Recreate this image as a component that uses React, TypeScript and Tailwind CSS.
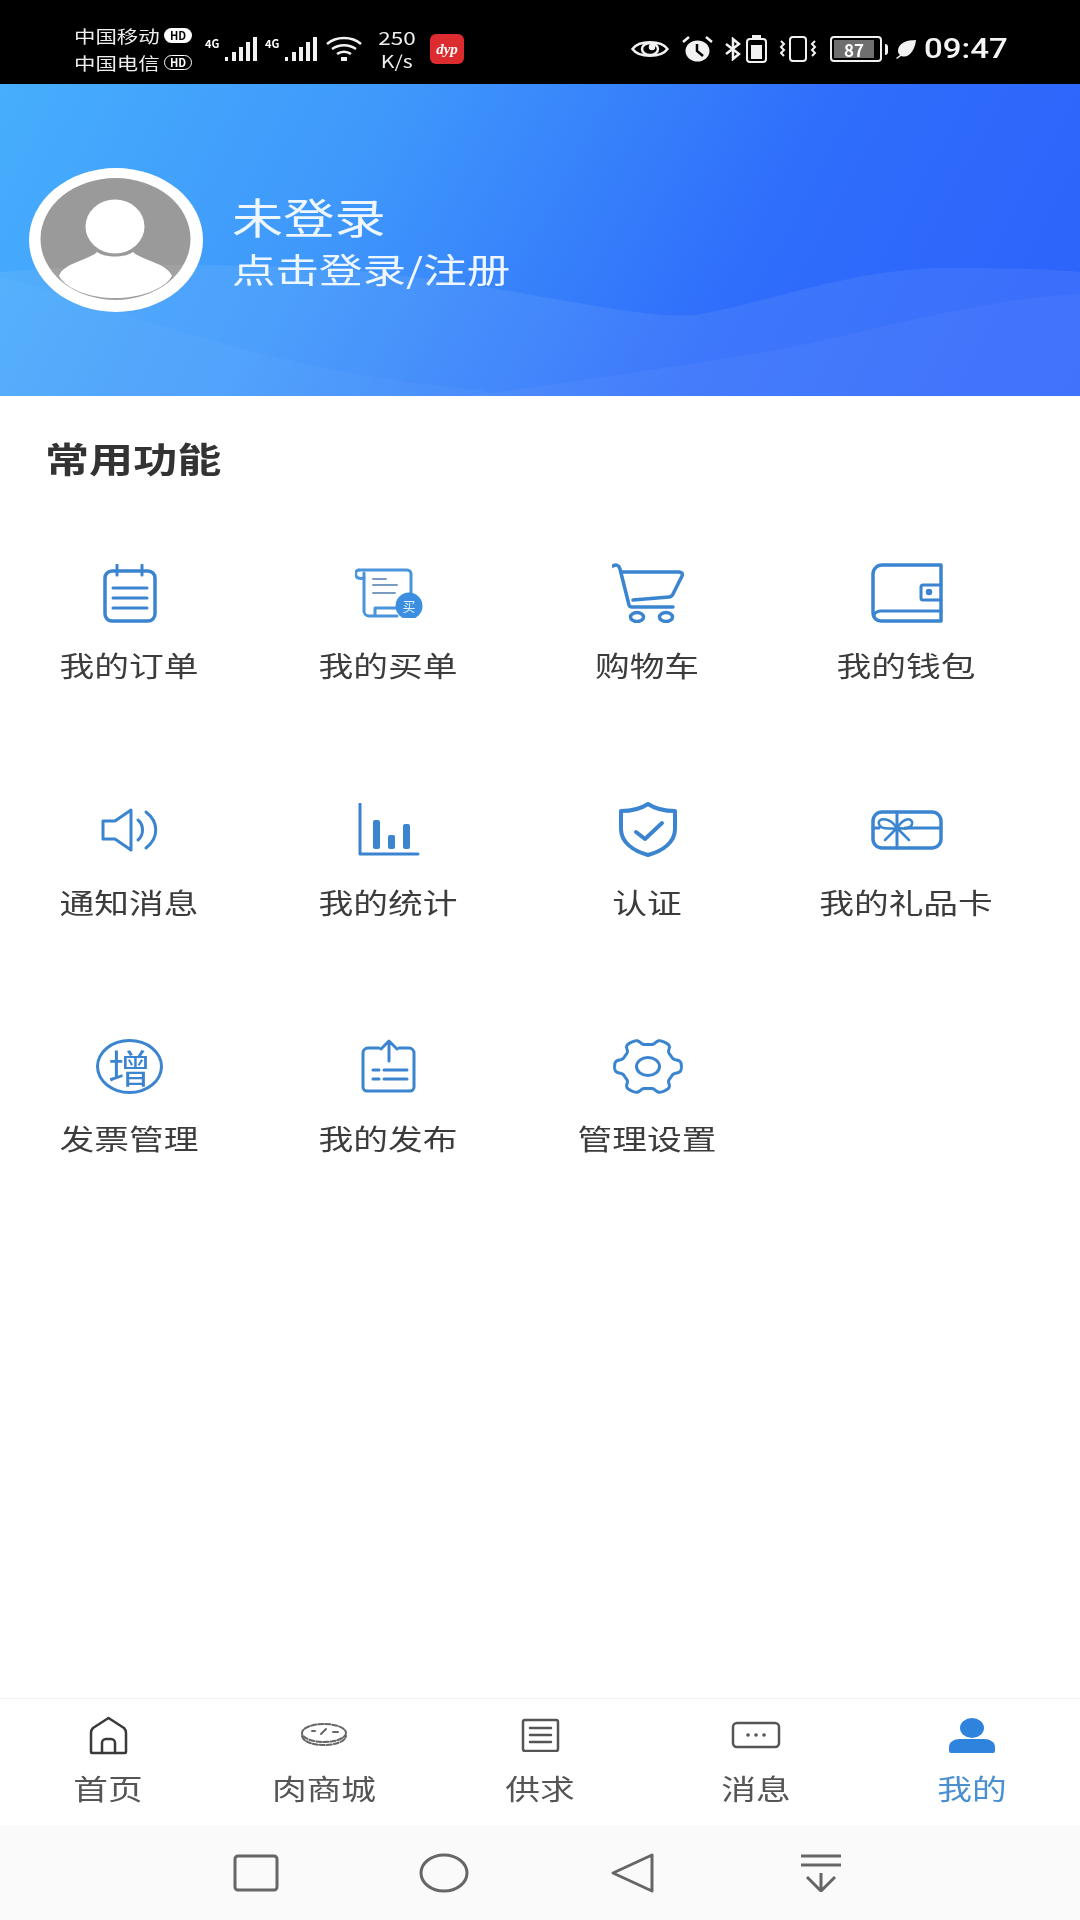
import type { ReactNode } from "react";

const BLUE = "#3a84d0";

function Svg({ w, h, children, className }: { w: number; h: number; children: ReactNode; className?: string }) {
  return (
    <svg
      width={w}
      height={h}
      viewBox={`0 0 ${w} ${h}`}
      fill="none"
      stroke="currentColor"
      strokeWidth={3.5}
      strokeLinecap="round"
      strokeLinejoin="round"
      className={className}
    >
      {children}
    </svg>
  );
}

function CalendarIcon() {
  return (
    <Svg w={54} h={59}>
      <rect x={2} y={7} width={50} height={50} rx={7} />
      <path d="M14 1v10M39 1v10" strokeWidth={3} />
      <path d="M10 24h34M10 34h34M10 44h34" strokeWidth={3} />
    </Svg>
  );
}

function BillIcon() {
  return (
    <Svg w={68} h={50} className="text-[#4a94dc]">
      <path d="M4 2h48a4 4 0 0 1 4 4v22" strokeWidth={3} />
      <path d="M4 2C1 2 0 5 1 8c1 2 4 3 8 2" strokeWidth={3} />
      <path d="M9 5v38a5 5 0 0 0 5 5h28M20 48v-8h22" strokeWidth={3} />
      <path d="M18 11h13M18 17h24M18 25h22" strokeWidth={2} stroke="#7a9cc0" />
      <circle cx={54} cy={38} r={13.5} fill="#3b8ee0" stroke="none" />
      <text x={54} y={43} fontSize={13} fill="#dfefff" stroke="none" textAnchor="middle">买</text>
    </Svg>
  );
}

function CartIcon() {
  return (
    <Svg w={72} h={60}>
      <path d="M1 3c3-2 6-1 7 3l9 36c.5 1.5 1 2 3 2h41" />
      <path d="M9 9h58c3 0 4 2 3 4l-9 18c-1 2-2 3-4 3l-36 3" />
      <ellipse cx={25} cy={54} rx={6.5} ry={4.5} />
      <ellipse cx={54} cy={54} rx={6.5} ry={4.5} />
    </Svg>
  );
}

function WalletIcon() {
  return (
    <Svg w={72} h={60}>
      <path d="M70 2H11a9 9 0 0 0-9 9v39a8 8 0 0 0 8 8h60z" />
      <path d="M3 52c1-2 4-4 7-4h60" strokeWidth={3} />
      <path d="M70 22H52a2 2 0 0 0-2 2v11a2 2 0 0 0 2 2h18" strokeWidth={3} />
      <circle cx={58} cy={29} r={1.5} fill="currentColor" />
    </Svg>
  );
}

function SpeakerIcon() {
  return (
    <Svg w={57} h={44}>
      <path d="M2 13h12L30 2v40L14 31H2z" strokeWidth={3} />
      <path d="M37 12c6 5 6 15 0 20M45 4c13 10 13 26 0 36" strokeWidth={3} />
    </Svg>
  );
}

function ChartIcon() {
  return (
    <Svg w={62} h={53}>
      <path d="M2 1v50h58" strokeWidth={3} />
      <rect x={15} y={17} width={7} height={29} rx={2} fill="currentColor" stroke="none" />
      <rect x={30} y={32} width={7} height={14} rx={2} fill="currentColor" stroke="none" />
      <rect x={45} y={21} width={7} height={25} rx={2} fill="currentColor" stroke="none" />
    </Svg>
  );
}

function ShieldIcon() {
  return (
    <Svg w={58} h={55}>
      <path d="M29 2c9 6 17 7 27 7v18c0 13-12 22-27 26C14 49 2 40 2 27V9c10 0 18-1 27-7z" strokeWidth={4} />
      <path d="M17 30l9 7 17-16" strokeWidth={4} />
    </Svg>
  );
}

function GiftIcon() {
  return (
    <Svg w={72} h={40}>
      <rect x={2} y={2} width={68} height={36} rx={9} />
      <path d="M26 2v36M2 18h6M34 18h36" strokeWidth={3} />
      <path d="M26 18C18 6 6 8 8 14c1 5 10 5 18 4zM26 18c8-12 16-10 15-4-1 5-7 5-15 4zM26 18L14 30M26 18l12 12" strokeWidth={2.5} />
    </Svg>
  );
}

function InvoiceIcon() {
  return (
    <div className="flex h-[55px] w-[67px] items-center justify-center rounded-[50%] border-[3px] border-current">
      <span className="block scale-x-[1.1] text-[39px] leading-[49px]">增</span>
    </div>
  );
}

function UploadIcon() {
  return (
    <Svg w={55} h={54}>
      <path d="M18 9H7a5 5 0 0 0-5 5v34a4 4 0 0 0 4 4h43a4 4 0 0 0 4-4V14a5 5 0 0 0-5-5H38" strokeWidth={3} />
      <path d="M28 2v20M20 10l8-8 8 8" strokeWidth={3} />
      <path d="M12 31h6M12 40h6M23 31h23M23 40h23" strokeWidth={3} />
    </Svg>
  );
}

// six squared-off teeth, points left and right like the reference
const GEAR_PATH =
  Array.from({ length: 241 }, (_, i) => {
    const a = (i / 240) * Math.PI * 2;
    const r = 0.89 + 0.11 * Math.tanh(2.2 * Math.cos(6 * a));
    return `${i === 0 ? "M" : "L"}${(35 + 33.5 * r * Math.cos(a)).toFixed(2)} ${(27.5 + 28 * r * Math.sin(a)).toFixed(2)}`;
  }).join("") + "Z";

function GearIcon() {
  return (
    <Svg w={70} h={55}>
      <path d={GEAR_PATH} strokeWidth={3} />
      <ellipse cx={35} cy={27.5} rx={11.5} ry={9} strokeWidth={3} />
    </Svg>
  );
}

const FEATURES: { label: string; icon: ReactNode }[] = [
  { label: "我的订单", icon: <CalendarIcon /> },
  { label: "我的买单", icon: <BillIcon /> },
  { label: "购物车", icon: <CartIcon /> },
  { label: "我的钱包", icon: <WalletIcon /> },
  { label: "通知消息", icon: <SpeakerIcon /> },
  { label: "我的统计", icon: <ChartIcon /> },
  { label: "认证", icon: <ShieldIcon /> },
  { label: "我的礼品卡", icon: <GiftIcon /> },
  { label: "发票管理", icon: <InvoiceIcon /> },
  { label: "我的发布", icon: <UploadIcon /> },
  { label: "管理设置", icon: <GearIcon /> },
];

function HomeTab() {
  return (
    <Svg w={41} h={39}>
      <path d="M3 36V17c0-2 1-4 2-5L20.5 2 36 12c1 1 2 3 2 5v19a1 1 0 0 1-1 1H4a1 1 0 0 1-1-1z" strokeWidth={2.5} />
      <path d="M14 37V27a4 4 0 0 1 4-4h5a4 4 0 0 1 4 4v10" strokeWidth={2.5} />
    </Svg>
  );
}

function MeatTab() {
  return (
    <Svg w={48} h={27} className="text-[#666]">
      <ellipse cx={24} cy={11} rx={22} ry={9} strokeWidth={2} strokeDasharray="5 2" />
      <path d="M2 14c2 12 42 12 44 0" strokeWidth={2} strokeDasharray="5 2" />
      <path d="M12 9h3M21 12l5-5M33 10h5" strokeWidth={2} />
    </Svg>
  );
}

function SupplyTab() {
  return (
    <Svg w={39} h={34} className="text-[#555]">
      <path d="M8 2H4a2 2 0 0 0-2 2v27a2 2 0 0 0 2 2h31a2 2 0 0 0 2-2V4a2 2 0 0 0-2-2H8z" strokeWidth={2.5} />
      <path d="M9 10h21M9 17h21M9 24h21" strokeWidth={2.5} />
    </Svg>
  );
}

function MessageTab() {
  return (
    <Svg w={50} h={28} className="text-[#555]">
      <rect x={2} y={2} width={46} height={24} rx={4} strokeWidth={2.5} />
      <path d="M17 14h.1M25 14h.1M33 14h.1" strokeWidth={3.5} />
    </Svg>
  );
}

function MeTab() {
  return (
    <svg width={46} height={35} viewBox="0 0 46 35" fill="currentColor">
      <ellipse cx={23} cy={10} rx={12} ry={10} />
      <path d="M0 33v-4c0-5 5-8 11-8h24c6 0 11 3 11 8v4a2 2 0 0 1-2 2H2a2 2 0 0 1-2-2z" />
    </svg>
  );
}

const TABS: { label: string; icon: ReactNode; active?: boolean }[] = [
  { label: "首页", icon: <HomeTab /> },
  { label: "肉商城", icon: <MeatTab /> },
  { label: "供求", icon: <SupplyTab /> },
  { label: "消息", icon: <MessageTab /> },
  { label: "我的", icon: <MeTab />, active: true },
];

function Signal() {
  return (
    <div className="flex w-[60px] items-start">
      <span className="mt-[-1px] w-[20px] text-[11px] leading-[14px] font-bold text-white">4G</span>
      <svg width={36} height={26} viewBox="0 0 36 26" fill="#f2f2f2" className="mt-[-1px]">
        <rect x={0} y={21} width={3} height={4} />
        <rect x={7} y={16} width={4} height={9} />
        <rect x={14} y={11} width={4} height={14} />
        <rect x={21} y={6} width={4} height={19} />
        <rect x={28} y={1} width={4} height={24} />
      </svg>
    </div>
  );
}

function CarrierLine({ name, solid }: { name: string; solid?: boolean }) {
  return (
    <div className="flex h-[27px] items-center">
      <span className="block w-[90px] origin-left scale-x-[1.26] text-[17px] leading-[20px] text-[#eee] whitespace-nowrap">{name}</span>
      <span
        className={
          solid
            ? "flex h-[15px] w-[28px] items-center justify-center rounded-full bg-white text-[11px] leading-none font-bold text-black"
            : "flex h-[15px] w-[28px] items-center justify-center rounded-full border border-white text-[11px] leading-none font-bold text-white"
        }
      >
        HD
      </span>
    </div>
  );
}

function StatusBar() {
  return (
    <div className="flex h-[84px] items-center bg-black pt-[14px] pl-[74px] text-[#f2f2f2]">
      <div className="flex w-[131px] flex-col">
        <CarrierLine name="中国移动" solid />
        <CarrierLine name="中国电信" />
      </div>
      <Signal />
      <Signal />
      <svg width={36} height={26} viewBox="0 0 36 26" fill="none" stroke="#f2f2f2" strokeWidth={2.5} className="ml-[1px]">
        <path d="M1 8c9-8 25-8 34 0M6 13c7-5 17-5 24 0M11 18c4-3 10-3 14 0" />
        <path d="M15 23h6" strokeWidth={4} />
      </svg>
      <div className="ml-[16px] flex w-[37px] flex-col items-center">
        <span className="block scale-x-[1.25] text-[18px] leading-[24px] text-[#eee]">250</span>
        <span className="block scale-x-[1.25] text-[17px] leading-[24px] text-[#eee]">K/s</span>
      </div>
      <div className="ml-[15px] flex h-[30px] w-[34px] items-center justify-center rounded-md bg-[#dd2c2f] font-['Liberation_Serif',serif] text-[15px] leading-none font-bold text-white italic">
        dyp
      </div>
      <div className="flex-1" />
      <svg width={38} height={24} viewBox="0 0 38 24" fill="none" stroke="#f2f2f2" strokeWidth={2.5}>
        <path d="M1.5 12C8 3 30 3 36.5 12 30 21 8 21 1.5 12z" />
        <ellipse cx={19} cy={12} rx={8} ry={6} />
        <circle cx={21} cy={10} r={2} fill="#f2f2f2" />
      </svg>
      <svg width={33} height={26} viewBox="0 0 33 26" className="ml-[12px]" fill="#f2f2f2">
        <ellipse cx={16.5} cy={15} rx={12} ry={10.5} />
        <path d="M2 6l6-5M31 6l-6-5" stroke="#f2f2f2" strokeWidth={2.5} />
        <path d="M16 8v7l6 5" stroke="#000" strokeWidth={2.5} fill="none" />
      </svg>
      <svg width={18} height={24} viewBox="0 0 18 24" fill="none" stroke="#f2f2f2" strokeWidth={2.5} className="ml-[10px]">
        <path d="M2 7l13 10-6 5V2l6 5L2 17" />
      </svg>
      <svg width={21} height={28} viewBox="0 0 21 28" fill="none" stroke="#f2f2f2" strokeWidth={2} className="ml-[4px]">
        <rect x={1} y={4} width={19} height={23} rx={3} />
        <path d="M6 1.5h9" strokeWidth={3} />
        <rect x={5} y={10} width={11} height={14} fill="#f2f2f2" stroke="none" />
      </svg>
      <svg width={40} height={26} viewBox="0 0 40 26" fill="none" stroke="#f2f2f2" strokeWidth={2} className="ml-[11px]">
        <rect x={12} y={1} width={16} height={24} rx={3} />
        <path d="M3 5l3 3-3 3 3 3-3 3 3 3M37 5l-3 3 3 3-3 3 3 3-3 3" />
      </svg>
      <div className="ml-[12px] flex h-[26px] w-[52px] items-center rounded-[4px] border-2 border-[#f2f2f2] p-[2px]">
        <span className="flex h-full w-[40px] items-center justify-center bg-[#6f6f6f] text-[17px] leading-none font-bold text-white">87</span>
      </div>
      <div className="ml-[3px] h-[11px] w-[3px] rounded-r-sm bg-[#f2f2f2]" />
      <svg width={22} height={20} viewBox="0 0 22 20" fill="#f2f2f2" className="ml-[7px]">
        <path d="M21 1C12 1 3 4 3 12c0 2 1 3 2 4L1 19l1 1 4-3c8 3 14-6 15-16zM8 12l6-5" />
      </svg>
      <span className="ml-[7px] block w-[84px] origin-left scale-x-[1.18] font-['Roboto',sans-serif] text-[28px] leading-none font-medium whitespace-nowrap text-[#f4f4f4]">
        09:47
      </span>
      <div className="w-[72px]" />
    </div>
  );
}

function Avatar() {
  return (
    <svg width={174} height={144} viewBox="0 0 174 144" className="shrink-0">
      <ellipse cx={87} cy={72} rx={87} ry={72} fill="#fff" />
      <ellipse cx={86.5} cy={71} rx={75} ry={61} fill="#9a9a9a" />
      <ellipse cx={86} cy={58.5} rx={29.5} ry={27} fill="#fff" />
      <path d="M30 108c4-13 30-16 38-24 8 6 28 6 36 0 8 8 34 11 39 24-8 14-33 22-57 22s-48-8-56-22z" fill="#fff" />
    </svg>
  );
}

function Header() {
  return (
    <div className="relative flex h-[312px] items-center overflow-hidden bg-[linear-gradient(118deg,#46aefc_0%,#3f98fb_32%,#2f6dfb_68%,#2c62fb_100%)] pl-[29px]">
      <svg className="absolute inset-0" width={1080} height={312} viewBox="0 0 1080 312" fill="#fff">
        <path opacity={0.07} d="M0 188c120-10 300-10 413 5 127 15 227 43 283 38 84-15 164-50 269-47 55 0 95 2 115 4v124H0z" />
        <path opacity={0.03} d="M0 193c100 23 250 93 480 113l20 6H0z" />
        <path opacity={0.04} d="M470 312C560 300 640 288 720 275 830 262 960 215 1080 210V312z" />
      </svg>
      <Avatar />
      <div className="relative mt-[2px] ml-[29px] flex flex-col gap-[6px] text-[#eef7ff]">
        <span className="block origin-left scale-x-[1.22] text-[42px] leading-[50px] whitespace-nowrap">未登录</span>
        <span className="block origin-left scale-x-[1.28] text-[34px] leading-[44px] whitespace-nowrap">点击登录/注册</span>
      </div>
    </div>
  );
}

export default function App() {
  return (
    <div className="flex h-[1920px] w-[1080px] flex-col overflow-hidden bg-white font-['Noto_Sans_CJK_SC','Noto_Sans',sans-serif] blur-[0.5px]">
      <StatusBar />
      <Header />

      <div className="flex-1">
        <h2 className="mt-[37px] ml-[45px] origin-left scale-x-[1.26] text-[35px] leading-[50px] font-bold text-[#333]">常用功能</h2>
        <div className="mt-[80px] grid grid-cols-[repeat(4,259px)] gap-y-[113.5px]" style={{ color: BLUE }}>
          {FEATURES.map((f) => (
            <div key={f.label} className="flex flex-col items-center">
              <div className="flex h-[60px] items-center justify-center">{f.icon}</div>
              <span className="mt-[22px] mb-[1px] block scale-x-[1.24] text-[28px] leading-[40px] whitespace-nowrap text-[#3c3c3c]">{f.label}</span>
            </div>
          ))}
        </div>
      </div>

      <nav className="flex h-[127px] border-t border-[#f2f2f2] pt-[16px]">
        {TABS.map((t) => (
          <div key={t.label} className={t.active ? "flex flex-1 flex-col items-center text-[#2e83dc]" : "flex flex-1 flex-col items-center text-[#3a3a3a]"}>
            <div className="flex h-[40px] items-center justify-center">{t.icon}</div>
            <span className={t.active ? "mt-[15px] block scale-x-[1.24] text-[28px] leading-[36px] whitespace-nowrap text-[#4a8fd0]" : "mt-[15px] block scale-x-[1.24] text-[28px] leading-[36px] whitespace-nowrap text-[#555]"}>
              {t.label}
            </span>
          </div>
        ))}
      </nav>

      <div className="grid h-[95px] grid-cols-[repeat(4,188.5px)] items-center justify-center bg-[#fafafa] pr-[3px] text-[#666]">
        <div className="flex justify-center">
          <svg width={46} height={38} viewBox="0 0 46 38" fill="none" stroke="currentColor" strokeWidth={3}>
            <rect x={2} y={2} width={42} height={34} rx={3} />
          </svg>
        </div>
        <div className="flex justify-center">
          <svg width={50} height={40} viewBox="0 0 50 40" fill="none" stroke="currentColor" strokeWidth={3}>
            <ellipse cx={25} cy={20} rx={23} ry={18} />
          </svg>
        </div>
        <div className="flex justify-center">
          <svg width={43} height={40} viewBox="0 0 43 40" fill="none" stroke="currentColor" strokeWidth={3} strokeLinejoin="round">
            <path d="M41 2v36L2 20z" />
          </svg>
        </div>
        <div className="flex justify-center">
          <svg width={42} height={38} viewBox="0 0 42 38" fill="none" stroke="currentColor" strokeWidth={3}>
            <path d="M1 2h40M1 11h40M21 19v18M7 23l14 14 14-14" />
          </svg>
        </div>
      </div>
    </div>
  );
}
